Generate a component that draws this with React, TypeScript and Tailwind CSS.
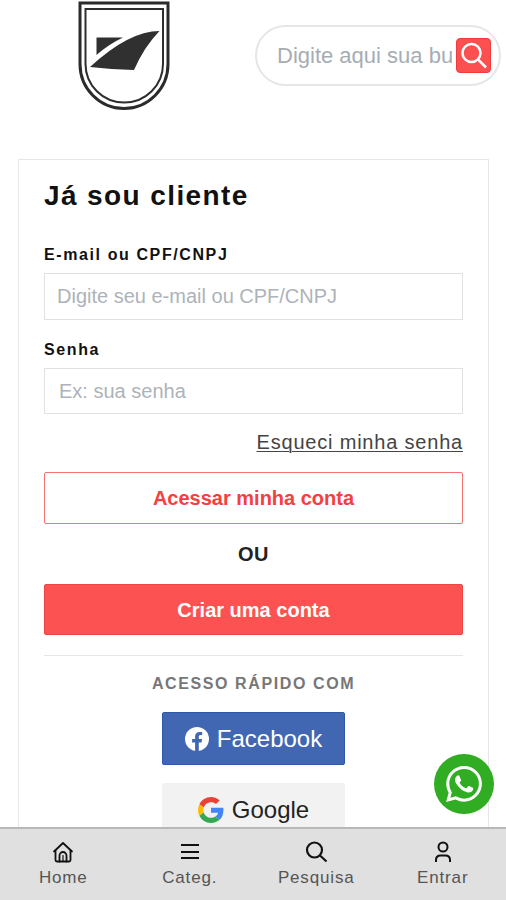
import { useState } from "react";
import type { ReactNode } from "react";

type NavItem = {
    label: string;
    icon: ReactNode;
};

const navItems: NavItem[] = [
    {
        label: "Home",
        icon: (
            <svg viewBox="0 0 24 24" className="h-6 w-6" fill="none" stroke="currentColor" strokeWidth="1.8" strokeLinejoin="round" strokeLinecap="round">
                <path d="M3 11.500 12 3l9 8.500" />
                <path d="M4.500 10.500V20q0 1.500 1.500 1.500h12q1.500 0 1.500-1.500v-9.500" />
                <path d="M8.500 21.500V15.500a3.500 3.500 0 0 1 7 0v6" />
                <path d="M12 15.500v5.500" strokeWidth="1.200" />
            </svg>
        ),
    },
    {
        label: "Categ.",
        icon: (
            <svg viewBox="0 0 24 24" className="h-6 w-6" fill="none" stroke="currentColor" strokeWidth="2">
                <path d="M3 5h18M3 12h18M3 18h18" />
            </svg>
        ),
    },
    {
        label: "Pesquisa",
        icon: (
            <svg viewBox="0 0 24 24" className="h-6 w-6" fill="none" stroke="currentColor" strokeWidth="2.200">
                <circle cx="10.500" cy="10" r="7.500" />
                <path d="m16 15.500 6.500 6" />
            </svg>
        ),
    },
    {
        label: "Entrar",
        icon: (
            <svg viewBox="0 0 24 24" className="h-6 w-6" fill="none" stroke="currentColor" strokeWidth="2">
                <circle cx="12" cy="7" r="4.500" />
                <path d="M5 22v-2q0-4.500 4.500-4.500h5q4.500 0 4.500 4.500v2" />
            </svg>
        ),
    },
];

function Logo() {
    return (
        <svg viewBox="0 0 92 111" className="h-[111px] w-[92px] shrink-0" role="img" aria-label="Logo">
            <path d="M2 3h88v61a44 44.500 0 0 1-88 0z" fill="#fff" stroke="#2b2b2b" strokeWidth="3" />
            <path d="M7.500 9h77.500v55a38.700 38.500 0 0 1-77.500 0z" fill="none" stroke="#2e2e2e" strokeWidth="2" />
            <path d="M18.500 37.500H45Q31 44 18.500 55z" fill="#303030" />
            <path d="M12 67Q51 31 81.500 31 66 47 56 70q-23-.5-44-3z" fill="#303030" />
        </svg>
    );
}

function FacebookIcon() {
    return (
        <svg viewBox="0 0 24 24" className="h-6 w-6" aria-hidden="true">
            <circle cx="12" cy="12" r="12" fill="#fff" />
            <path d="M10.100 24v-8.400H7.100v-3.500h3V9.500c0-3 1.800-4.600 4.500-4.600 1.300 0 2.600.2 2.600.2v3h-1.500c-1.500 0-1.900.9-1.900 1.800v2.200h3.300l-.5 3.500h-2.800V24z" fill="#4267b2" />
        </svg>
    );
}

function GoogleIcon() {
    return (
        <svg viewBox="0 0 48 48" className="h-[26px] w-[26px]" aria-hidden="true">
            <path fill="#EA4335" d="M24 9.500c3.540 0 6.710 1.220 9.210 3.600l6.850-6.850C35.900 2.380 30.470 0 24 0 14.620 0 6.510 5.380 2.560 13.220l7.980 6.190C12.430 13.720 17.740 9.500 24 9.500z" />
            <path fill="#4285F4" d="M46.980 24.550c0-1.570-.15-3.090-.38-4.550H24v9.020h12.940c-.58 2.960-2.260 5.480-4.780 7.180l7.730 6c4.510-4.180 7.090-10.360 7.090-17.650z" />
            <path fill="#FBBC05" d="M10.530 28.590A14.500 14.500 0 0 1 9.770 24c0-1.600.27-3.140.76-4.590l-7.980-6.190A23.900 23.900 0 0 0 0 24c0 3.880.92 7.540 2.560 10.780z" />
            <path fill="#34A853" d="M24 48c6.480 0 11.930-2.130 15.890-5.810l-7.730-6c-2.150 1.450-4.920 2.300-8.160 2.300-6.260 0-11.570-4.220-13.470-9.910l-7.980 6.190C6.510 42.620 14.620 48 24 48z" />
        </svg>
    );
}

function WhatsAppIcon() {
    return (
        <svg viewBox="0 0 24 24" className="h-9 w-9" fill="#fff" aria-hidden="true">
            <path d="M17.472 14.382c-.297-.149-1.758-.867-2.030-.967-.273-.099-.471-.148-.670.150-.197.297-.767.966-.940 1.164-.173.199-.347.223-.644.075-.297-.150-1.255-.463-2.390-1.475-.883-.788-1.480-1.761-1.653-2.059-.173-.297-.018-.458.130-.606.134-.133.298-.347.446-.520.149-.174.198-.298.298-.497.099-.198.050-.371-.025-.520-.075-.149-.669-1.612-.916-2.207-.242-.579-.487-.500-.669-.510-.173-.008-.371-.010-.570-.010-.198 0-.520.074-.792.372-.272.297-1.040 1.016-1.040 2.479 0 1.462 1.065 2.875 1.213 3.074.149.198 2.096 3.200 5.077 4.487.709.306 1.262.489 1.694.625.712.227 1.360.195 1.871.118.571-.085 1.758-.719 2.006-1.413.248-.694.248-1.289.173-1.413-.074-.124-.272-.198-.570-.347" />
            <path d="M12.050 0C5.495 0 .160 5.335.157 11.892c0 2.096.547 4.142 1.588 5.945L.057 24l6.305-1.654a11.882 11.882 0 0 0 5.683 1.448h.005c6.554 0 11.890-5.335 11.893-11.893A11.821 11.821 0 0 0 12.050 0m0 21.785h-.004a9.870 9.870 0 0 1-5.031-1.378l-.361-.214-3.741.982.998-3.648-.235-.374a9.860 9.860 0 0 1-1.510-5.260c.001-5.450 4.436-9.884 9.888-9.884a9.825 9.825 0 0 1 9.884 9.889c-.003 5.450-4.437 9.887-9.888 9.887" />
        </svg>
    );
}

export default function App() {
    const [login, setLogin] = useState("");
    const [password, setPassword] = useState("");

    return (
        <div className="flex h-screen flex-col bg-white font-['Liberation_Sans',Arial,sans-serif] text-[#111]">
            <main className="min-h-0 flex-1 overflow-y-auto [scrollbar-width:none]">
                <header className="flex items-start justify-between pl-[78px] pr-[5px]">
                    <Logo />
                    <form className="mt-[25px] flex h-[61px] w-[246px] items-center gap-1 rounded-full border-2 border-[#e6e6e6] pl-5 pr-2" onSubmit={(e) => e.preventDefault()}>
                        <input
                            type="text"
                            aria-label="Buscar"
                            placeholder="Digite aqui sua busca"
                            className="min-w-0 flex-1 bg-transparent text-[22px] outline-none placeholder:text-[#a5adb3]"
                        />
                        <button type="submit" aria-label="Pesquisar" className="flex h-[35px] w-[35px] items-center justify-center rounded-sm border border-[#ee3b3b] bg-[#fc5050] text-white">
                            <svg viewBox="0 0 30 30" className="h-[30px] w-[30px] shrink-0" fill="none" stroke="currentColor" strokeWidth="2.500">
                                <circle cx="12.500" cy="12" r="9" />
                                <path d="m19 18.500 8 8" />
                            </svg>
                        </button>
                    </form>
                </header>

                <section className="mr-[17px] ml-[18px] mt-12 border border-[#e6e6e6] px-[25px] pb-10">
                    <h1 className="mt-5 text-[28px] leading-8 font-bold tracking-wider">Já sou cliente</h1>

                    <form className="flex flex-col" onSubmit={(e) => e.preventDefault()}>
                        <label htmlFor="login" className="mt-[33px] text-base leading-5 font-bold tracking-widest">E-mail ou CPF/CNPJ</label>
                        <input
                            id="login"
                            type="text"
                            value={login}
                            onChange={(e) => setLogin(e.target.value)}
                            placeholder="Digite seu e-mail ou CPF/CNPJ"
                            className="mt-2 h-[47px] border border-[#dfe1e3] px-3 text-[20px] outline-none placeholder:text-[#adb3b9]"
                        />
                        <label htmlFor="password" className="mt-5 text-base leading-5 font-bold tracking-widest">Senha</label>
                        <input
                            id="password"
                            type="password"
                            value={password}
                            onChange={(e) => setPassword(e.target.value)}
                            placeholder="Ex: sua senha"
                            className="mt-2 h-[46px] border border-[#dfe1e3] px-[14px] text-[20px] outline-none placeholder:text-[#adb3b9]"
                        />
                        <a href="#senha" className="mt-4 self-end text-[20px] leading-6 tracking-[0.04em] text-[#444] underline decoration-1 underline-offset-2">
                            Esqueci minha senha
                        </a>
                        <button type="submit" className="mt-[18px] h-[52px] rounded-xs border border-[#f77171] text-[20px] font-bold text-[#f54040]">
                            Acessar minha conta
                        </button>
                        <p className="my-[18px] text-center text-[20px] leading-6 font-bold tracking-wide text-[#222]">OU</p>
                        <button type="button" className="h-[51px] rounded-xs border border-[#ee4545] bg-[#fc5252] text-[20px] font-bold text-white">
                            Criar uma conta
                        </button>
                    </form>

                    <div className="mt-5 flex flex-col items-center border-t border-[#e6e6e6]">
                        <h2 className="mt-[18px] text-base leading-5 font-bold tracking-widest text-[#777]">ACESSO RÁPIDO COM</h2>
                        <button type="button" className="mt-[18px] flex h-[53px] w-[183px] items-center justify-center gap-2 rounded-xs border border-[#2b58a8] bg-[#4267b2] text-2xl text-white">
                            <FacebookIcon />
                            Facebook
                        </button>
                        <button type="button" className="mt-[18px] flex h-[53px] w-[183px] items-center justify-center gap-2 rounded-xs bg-[#f2f2f2] text-2xl text-[#222]">
                            <GoogleIcon />
                            Google
                        </button>
                    </div>
                </section>
            </main>

            <nav className="grid h-[73px] shrink-0 grid-cols-4 border-t-2 border-[#b8b8b8] bg-[#e0e0e0]">
                {navItems.map((item) => (
                    <a key={item.label} href="#" className="flex flex-col items-center pt-[11px] text-[#111]">
                        {item.icon}
                        <span className="mt-1 text-[17px] leading-5 tracking-wider text-[#555]">{item.label}</span>
                    </a>
                ))}
            </nav>

            <a href="#whatsapp" aria-label="WhatsApp" className="fixed right-3 bottom-[86px] flex h-[60px] w-[60px] items-center justify-center rounded-full bg-[#30ad23]">
                <WhatsAppIcon />
            </a>
        </div>
    );
}
